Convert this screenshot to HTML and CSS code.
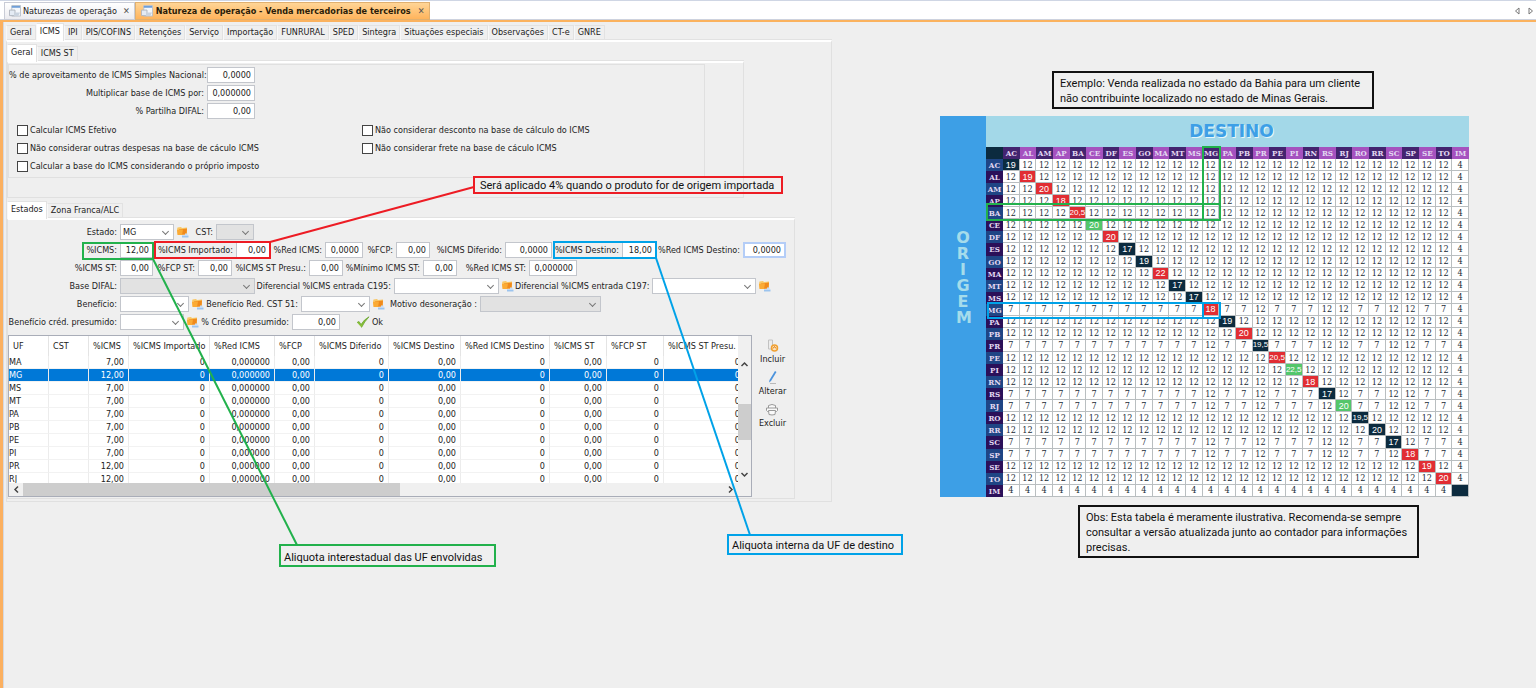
FILE: index.html
```html
<!DOCTYPE html>
<html lang="pt-BR">
<head>
<meta charset="utf-8">
<title>Natureza de operação</title>
<link rel="stylesheet" href="styles.css">
</head>
<body>
<svg class="defs" width="0" height="0" aria-hidden="true">
  <symbol id="folder" viewBox="0 0 13 12">
    <path d="M1 3.500 1.500 1.500 5 1 6 2 11 1.500 11 8 2 9z" fill="#f9c765"/>
    <path d="M3 3.500 11 2.500 10.500 8.500 2 9z" fill="#f08a1c"/>
    <path d="M1 4 7 3.500 6 9 1.500 9z" fill="#fbab35"/>
    <path d="M6 9.500h6.500v2H6z" fill="#9cc4ee"/>
    <path d="M9 7.500h2.500v2.500H9z" fill="#c6dcf4"/>
  </symbol>
  <symbol id="window" viewBox="0 0 13 13">
    <path d="M3 .5h9.500v11.500H3z" fill="#f4f7fb" stroke="#b9bfc8"/>
    <path d="M3 1h9v2H3z" fill="#6f9fd8"/>
    <path d="M.5 5.500h6v6h-6z" fill="#e4ebf4" stroke="#aeb4bd"/>
    <path d="M7 8h5l-2 4H5z" fill="#c9d3df"/>
  </symbol>
</svg>

<header class="docs">
  <button class="doc"><svg class="doc-icon"><use href="#window"/></svg>Naturezas de operação<span class="close">✕</span></button>
  <button class="doc doc-active"><svg class="doc-icon"><use href="#window"/></svg>Natureza de operação - Venda mercadorias de terceiros<span class="close">✕</span></button>
  <span class="arrows"><svg width="20" height="8" viewBox="0 0 20 8" fill="none" stroke="#777"><path d="M5 1v6L1.500 4zM15 1v6l3.500-3z"/></svg></span>
</header>

<main class="work">
  <section class="form">
    <nav class="tabs">
      <button>Geral</button><button class="on">ICMS</button><button>IPI</button><button>PIS/COFINS</button><button>Retenções</button><button>Serviço</button><button>Importação</button><button>FUNRURAL</button><button>SPED</button><button>Sintegra</button><button>Situações especiais</button><button>Observações</button><button>CT-e</button><button>GNRE</button>
    </nav>
    <div class="panel outer">
      <nav class="tabs"><button class="on">Geral</button><button>ICMS ST</button></nav>
      <div class="panel general">
        <div class="group">
          <div class="row g1"><label for="a1">% de aproveitamento de ICMS Simples Nacional:</label><input id="a1" value="0,0000"></div>
          <div class="row g1"><label for="a2">Multiplicar base de ICMS por:</label><input id="a2" value="0,000000"></div>
          <div class="row g1"><label for="a3">% Partilha DIFAL:</label><input id="a3" value="0,00"></div>
          <div class="checks">
            <label><input type="checkbox">Calcular ICMS Efetivo</label>
            <label><input type="checkbox">Não considerar desconto na base de cálculo do ICMS</label>
            <label><input type="checkbox">Não considerar outras despesas na base de cáculo ICMS</label>
            <label><input type="checkbox">Não considerar frete na base de cáculo ICMS</label>
            <label><input type="checkbox">Calcular a base do ICMS considerando o próprio imposto</label>
          </div>
        </div>
      </div>

      <nav class="tabs states-tabs"><button class="on">Estados</button><button>Zona Franca/ALC</button></nav>
      <div class="panel states">
        <div class="row r1"><label for="b1">Estado:</label><span class="select"><select id="b1"><option>MG</option></select></span><svg class="folder"><use href="#folder"/></svg><label for="b2">CST:</label><span class="select off"><select id="b2" disabled></select></span></div>
        <div class="row r2"><label for="c1">%ICMS:</label><input id="c1" value="12,00"><label for="c2">%ICMS Importado:</label><input id="c2" value="0,00"><label for="c3">%Red ICMS:</label><input id="c3" value="0,0000"><label for="c4">%FCP:</label><input id="c4" value="0,00"><label for="c5">%ICMS Diferido:</label><input id="c5" value="0,0000"><label for="c6">%ICMS Destino:</label><input id="c6" value="18,00"><label for="c7">%Red ICMS Destino:</label><input id="c7" class="focus" value="0,0000"></div>
        <div class="row r3"><label for="d1">%ICMS ST:</label><input id="d1" value="0,00"><label for="d2">%FCP ST:</label><input id="d2" value="0,00"><label for="d3">%ICMS ST Presu.:</label><input id="d3" value="0,00"><label for="d4">%Mínimo ICMS ST:</label><input id="d4" value="0,00"><label for="d5">%Red ICMS ST:</label><input id="d5" value="0,000000"></div>
        <div class="row r4"><label for="e1">Base DIFAL:</label><span class="select off"><select id="e1" disabled></select></span><label for="e2">Diferencial %ICMS entrada C195:</label><span class="select"><select id="e2"></select></span><svg class="folder"><use href="#folder"/></svg><label for="e3">Diferencial %ICMS entrada C197:</label><span class="select"><select id="e3"></select></span><svg class="folder"><use href="#folder"/></svg></div>
        <div class="row r5"><label for="f1">Benefício:</label><span class="select"><select id="f1"></select></span><svg class="folder"><use href="#folder"/></svg><label for="f2">Benefício Red. CST 51:</label><span class="select"><select id="f2"></select></span><svg class="folder"><use href="#folder"/></svg><label for="f3">Motivo desoneração :</label><span class="select off"><select id="f3" disabled></select></span></div>
        <div class="row r6"><label for="h1">Benefício créd. presumido:</label><span class="select"><select id="h1"></select></span><svg class="folder"><use href="#folder"/></svg><label for="h2">% Crédito presumido:</label><input id="h2" value="0,00"><button class="ok"><svg width="14" height="12" viewBox="0 0 14 12"><path d="M1 6.500 3 5.500 5 8.500Q8 3.500 13 .8 8.500 5.500 5.500 11.500 4.500 11.500z" fill="#8cc43a" stroke="#5f9e22" stroke-width=".7"/></svg>Ok</button></div>

        <div class="list">
          <div class="grid-box">
            <div class="grid-view">
              <table class="grid">
                <colgroup><col class="w40"><col class="w40"><col class="w40"><col class="w81"><col class="w65"><col class="w40"><col class="w74"><col class="w72"><col class="w89"><col class="w57"><col class="w57"><col class="w81"></colgroup>
                <thead><tr><th>UF</th><th>CST</th><th>%ICMS</th><th>%ICMS Importado</th><th>%Red ICMS</th><th>%FCP</th><th>%ICMS Diferido</th><th>%ICMS Destino</th><th>%Red ICMS Destino</th><th>%ICMS ST</th><th>%FCP ST</th><th>%ICMS ST Presu.</th></tr></thead>
                <tbody id="rates"></tbody>
              </table>
            </div>
            <div class="vbar"><svg width="9" height="6" viewBox="0 0 9 6"><path d="M1.500 5 4.500 2 7.500 5"/></svg><i></i><svg width="9" height="6" viewBox="0 0 9 6"><path d="M1.500 1 4.500 4 7.500 1"/></svg></div>
            <div class="hbar"><svg width="6" height="9" viewBox="0 0 6 9"><path d="M5 1.500 2 4.500 5 7.500"/></svg><i></i><svg width="6" height="9" viewBox="0 0 6 9"><path d="M1 1.500 4 4.500 1 7.500"/></svg></div>
          </div>
          <div class="actions">
            <button><svg width="14" height="15" viewBox="0 0 14 15"><path d="M2.500 2h4v9h-4z" fill="#ececec" stroke="#c2c2c2"/><circle cx="8.500" cy="10" r="3" fill="#fbe3bd" stroke="#f0a030" stroke-width="1.500"/><path d="M7 10.500 8.500 8.500 10 10.500" stroke="#e07b10" fill="none"/></svg>Incluir</button>
            <button><svg width="14" height="15" viewBox="0 0 14 15"><path d="M9 1 10.500 2 5 11 3 12.500 3.500 10z" fill="#4b93dd"/><path d="M4 13.500h6" stroke="#b9b9b9"/></svg>Alterar</button>
            <button><svg width="14" height="15" viewBox="0 0 14 15" fill="#fafafa" stroke="#999"><path d="M3.500 6V3.500q3.500-2 7 0V6"/><path d="M1.500 6h11v2.500l-1 1h-9l-1-1z"/><path d="M3.500 8.500h7l-.5 4q-3 1-6 0z"/></svg>Excluir</button>
          </div>
        </div>
      </div>
    </div>

    <svg class="marks" width="930" height="660" viewBox="0 0 930 660" fill="none" stroke-width="2" aria-hidden="true">
      <g stroke="#22b14c"><path d="M83 243H153V259H83z"/><path d="M153 259 297 545"/></g>
      <g stroke="#ed1c24"><path d="M155 242H270V258H155z"/><path d="M270 242 474 187"/></g>
      <g stroke="#00a2e8"><path d="M554 242H656V258H554z"/><path d="M656 258 750 535"/></g>
    </svg>
    <p class="note note-red">Será aplicado 4% quando o produto for de origem importada</p>
    <p class="note note-green">Aliquota interestadual das UF envolvidas</p>
    <p class="note note-blue">Aliquota interna da UF de destino</p>
  </section>

  <aside class="example">
    <p class="box box-top">Exemplo: Venda realizada no estado da Bahia para um cliente não contribuinte localizado no estado de Minas Gerais.</p>
    <div class="chart">
      <div class="origin"><span>ORIGEM</span></div>
      <div class="dest">
        <h2>DESTINO</h2>
        <table class="matrix"><thead id="mhead"></thead><tbody id="mbody"></tbody></table>
        <i class="hl hl-row"></i><i class="hl hl-col"></i><i class="hl hl-mg"></i><i class="hl hl-cell"></i>
      </div>
    </div>
    <p class="box box-bottom">Obs: Esta tabela é meramente ilustrativa. Recomenda-se sempre consultar a versão atualizada junto ao contador para informações precisas.</p>
  </aside>
</main>
<script src="script.js"></script>
</body>
</html>
```
FILE: styles.css
```css
* { box-sizing: border-box; }
body { margin: 0; min-height: 100vh; display: flex; flex-direction: column; background: #efefef; color: #222; font: 9px/12px "DejaVu Sans Condensed", "DejaVu Sans", sans-serif; }
button, input, select { font: inherit; color: inherit; }
button { border: 0; background: none; padding: 0; white-space: nowrap; }
p, h2 { margin: 0; }
.defs { position: absolute; }

.docs { display: flex; height: 22px; padding-left: 4px; background: #fff; border-top: 1px solid #cfd6e4; border-bottom: 2px solid #fbb25e; box-shadow: inset 0 -1px #cdd2de; }
.doc { display: flex; align-items: center; gap: 2px; height: 18px; margin-top: 1px; padding: 0 4px; background: linear-gradient(#fff, #ececf0); border: 1px solid #c9ccd6; }
.doc-active { gap: 3px; padding: 0 4px 0 5px; font-weight: bold; color: #2a1c08; background: linear-gradient(#ffd596, #ffb45c); border-color: #e0b070; }
.doc-icon { width: 12px; height: 12px; }
.close { margin-left: 4px; font-size: 9px; font-weight: normal; color: #555; }
.arrows { margin: 5px 2px 0 auto; }

.work { flex: 1; display: flex; border-left: 3px solid #fbb060; box-shadow: inset 1px 0 #d5d8e0; }
.form { position: relative; flex: 0 0 829px; padding: 1px 0 0 3px; }
.tabs { display: flex; align-items: flex-end; height: 17px; }
.tabs button { height: 15px; padding: 0 3px 2px; border: 1px solid #e2e2e2; border-bottom: 0; border-left-color: #f8f8f8; }
.tabs .on { height: 18px; margin-bottom: -1px; padding-bottom: 4px; background: #fff; }
.panel { border: 1px solid #e0e0e0; border-top: 2px solid #fff; box-shadow: 0 -1px #e2e2e2; }
.outer { height: 462px; padding-top: 2px; }
.general { width: 737px; height: 137px; }
.group { width: 697px; height: 114px; margin-top: 1px; padding-top: 2px; border: 1px solid #e0e0e0; }
.row { display: grid; height: 16px; margin-bottom: 2px; }
.row label { text-align: right; padding-right: 3px; line-height: 16px; white-space: nowrap; }
.g1 { grid-template-columns: 198px 48px; }
.row input { width: 100%; min-width: 0; padding: 0 3px 0 0; text-align: right; background: #fff; border: 1px solid #c3c6cc; border-radius: 0; outline: 0; }
.row .focus { border: 2px solid #b4cdf7; }
.checks { display: grid; grid-template-columns: 345px 1fr; grid-auto-rows: 18px; padding-left: 8px; }
.checks label { display: flex; align-items: center; gap: 2px; }
.checks input { appearance: none; width: 11px; height: 11px; margin: 0; background: #fff; border: 1px solid #444; }

.states-tabs { margin-top: 3px; }
.states { width: 788px; height: 281px; padding: 4px 0 0; }
.r1 { grid-template-columns: 112px 54px 16px 26px 38px; }
.r2 { grid-template-columns: 112px 33px 83px 34px 55px 38px 33px 34px 75px 47px 70px 34px 87px 43px; }
.r3 { grid-template-columns: 112px 33px 45px 34px 77px 34px 80px 34px 72px 48px; }
.r4 { grid-template-columns: 112px 135px 139px 105px 16px 137px 104px 16px; }
.r5 { grid-template-columns: 112px 69px 16px 96px 69px 16px 94px 121px; }
.r6 { grid-template-columns: 112px 64px 16px 92px 48px 60px; }
.select { position: relative; display: block; }
.select select { appearance: none; display: block; width: 100%; height: 16px; padding: 0 2px; background: #fff; border: 1px solid #c3c6cc; border-radius: 0; opacity: 1; }
.select.off select { background: #e2e2e2; }
.select::after { content: ""; position: absolute; right: 6px; top: 5px; width: 4px; height: 4px; border: solid #777; border-width: 0 1px 1px 0; transform: rotate(45deg); }
.folder { width: 13px; height: 12px; margin: 2px 0 0 2px; }
.ok { display: flex; align-items: center; gap: 2px; margin-left: 16px; }

.list { display: flex; margin-top: 5px; }
.grid-box { display: grid; grid-template: 147px 13px / 729px 13px; background: #fff; border: 1px solid #a9adb8; }
.grid-view { overflow: hidden; }
.grid { width: 736px; table-layout: fixed; border-collapse: separate; border-spacing: 0; }
.grid th { height: 20px; padding: 0 0 0 4px; font-weight: normal; text-align: left; white-space: nowrap; border-right: 1px solid #e4e4e4; }
.grid td { height: 13px; padding: 0 4px 0 0; line-height: 12px; text-align: right; border-right: 1px solid #ececec; border-bottom: 1px solid #f2f2f2; }
.grid td:first-child { text-align: left; }
.grid .sel td { background: #0078d7; color: #fff; }
.w40 { width: 40px; } .w57 { width: 57px; } .w65 { width: 65px; } .w72 { width: 72px; } .w74 { width: 74px; } .w81 { width: 81px; } .w89 { width: 89px; }
.vbar, .hbar { display: flex; background: #f0f0f0; }
.vbar { flex-direction: column; align-items: center; grid-row: span 2; padding: 25px 0 18px; }
.vbar i { width: 13px; height: 36px; margin: 37px 0 auto; background: #cdcdcd; }
.hbar { align-items: center; padding: 0 4px; }
.hbar i { width: 377px; height: 13px; margin: 0 auto 0 4px; background: #cdcdcd; }
.vbar path, .hbar path { fill: none; stroke: #444; stroke-width: 1.500; }
.actions { display: flex; flex-direction: column; align-items: center; gap: 5px; width: 41px; padding-top: 3px; }
.actions button { display: flex; flex-direction: column; align-items: center; }

.marks { position: absolute; left: -3px; top: -22px; pointer-events: none; }
.note { position: absolute; padding: 0 3px; font: 11px/15px Roboto, sans-serif; white-space: nowrap; color: #111; border: 2px solid; }
.note-red { left: 470px; top: 154px; width: 310px; height: 18px; padding-left: 5px; border-color: #ed1c24; }
.note-green { left: 276px; top: 522px; width: 217px; height: 23px; padding-top: 4px; border-color: #22b14c; }
.note-blue { left: 724px; top: 512px; width: 176px; height: 21px; padding-top: 2px; border-color: #00a2e8; }

.example { flex: 0 0 529px; margin-left: 108px; padding-top: 49px; }
.box { padding: 3px 6px 1px; font: 11px/15px Roboto, sans-serif; color: #111; border: 2px solid #111; }
.box-top { width: 322px; margin-left: 112px; }
.box-bottom { width: 341px; margin: 8px 0 0 138px; }
.chart { display: flex; margin-top: 7px; }
.origin { flex: 0 0 46px; display: flex; justify-content: center; padding-top: 114px; background: #3d9fe6; }
.origin span { width: 14px; font: bold 16px/16px "DejaVu Sans", sans-serif; text-align: center; word-break: break-all; color: #a5dceb; }
.dest { position: relative; flex: 1; }
.dest h2 { height: 31px; padding-left: 8px; font: bold 17px/30px "DejaVu Sans", sans-serif; text-align: center; color: #3d9fe6; text-shadow: 1px 1px #e6f6fb; background: #a3d8e8; }
.matrix { width: 100%; height: 350px; table-layout: fixed; border-collapse: separate; border-spacing: 0; font: 9px/10px "DejaVu Serif Condensed", "DejaVu Serif", serif; color: #1a2b36; background: #fff; }
.matrix th, .matrix td { padding: 0; height: 12px; text-align: center; }
.matrix th { font-size: 8px; color: #e3d9f2; background: #43246f; }
.matrix thead th:nth-child(odd) { background: #a552bf; }
.matrix tbody th { background: #2b1059; }
.matrix tbody tr:nth-child(odd) th { background: #1f4585; }
.matrix thead th:first-child { width: 17px; background: #0c2b3f; }
.matrix td { border-right: 1px solid #b9bec0; border-bottom: 1px solid #b9bec0; }
.matrix .navy, .matrix .red, .matrix .green { color: #fff; font-family: "Liberation Sans", sans-serif; }
.matrix .long { font-size: 8px; }
.matrix .navy { background: #0c2b3f; }
.matrix .red { background: #e12d33; }
.matrix .green { background: #53c66b; }
.hl { position: absolute; border: 2px solid #22b14c; }
.hl-row { left: 0; top: 87px; width: 235px; height: 18px; }
.hl-col { left: 216px; top: 30px; width: 19px; height: 75px; }
.hl-mg { left: 1px; top: 186px; width: 234px; height: 17px; border-color: #00a2e8; }
.hl-cell { left: 216px; top: 186px; width: 19px; height: 17px; border-color: #00a2e8; }
```
FILE: script.js
```js
// Rows of the state list: UF and its interstate rate.
const rates = [["MA", "7,00"], ["MG", "12,00"], ["MS", "7,00"], ["MT", "7,00"], ["PA", "7,00"], ["PB", "7,00"], ["PE", "7,00"], ["PI", "7,00"], ["PR", "12,00"], ["RJ", "12,00"]];
document.getElementById("rates").innerHTML = rates.map(([uf, icms]) => {
  const cells = [uf, "", icms, "0", "0,000000", "0,00", "0", "0,00", "0", "0,00", "0", "0"];
  return `<tr${uf === "MG" ? ' class="sel"' : ""}>${cells.map(c => `<td>${c}</td>`).join("")}</tr>`;
}).join("");

// Origin/destination matrix: internal rate and colour on the diagonal.
const internal = {
  AC: ["19", "navy"], AL: ["19", "red"], AM: ["20", "red"], AP: ["18", "red"], BA: ["20,5", "red long"], CE: ["20", "green"], DF: ["20", "red"],
  ES: ["17", "navy"], GO: ["19", "navy"], MA: ["22", "red"], MT: ["17", "navy"], MS: ["17", "navy"], MG: ["18", "red"], PA: ["19", "navy"],
  PB: ["20", "red"], PR: ["19,5", "navy long"], PE: ["20,5", "red long"], PI: ["22,5", "green long"], RN: ["18", "red"], RS: ["17", "navy"], RJ: ["20", "green"],
  RO: ["19,5", "navy long"], RR: ["20", "navy"], SC: ["17", "navy"], SP: ["18", "red"], SE: ["19", "red"], TO: ["20", "red"], IM: ["", "navy"]
};
const ufs = Object.keys(internal);
const south = ["MG", "PR", "RS", "RJ", "SC", "SP"];
function rate(from, to) {
  if (from === "IM" || to === "IM") return "4";
  return south.includes(from) && !south.includes(to) ? "7" : "12";
}
document.getElementById("mhead").innerHTML = `<tr><th></th>${ufs.map(u => `<th>${u}</th>`).join("")}</tr>`;
document.getElementById("mbody").innerHTML = ufs.map(from =>
  `<tr><th>${from}</th>${ufs.map(to => from === to
    ? `<td class="${internal[to][1]}">${internal[to][0]}</td>`
    : `<td>${rate(from, to)}</td>`).join("")}</tr>`).join("");
```
